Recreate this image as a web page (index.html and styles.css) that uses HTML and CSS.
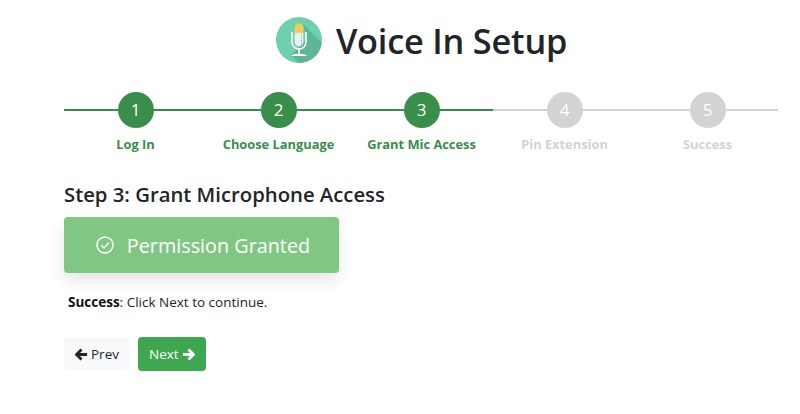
FILE: index.html
```html
<!DOCTYPE html>
<html lang="en">
<head>
  <meta charset="UTF-8">
  <title>Voice In Setup</title>
  <meta name="viewport" content="width=device-width, initial-scale=1.0">
  <link rel="stylesheet" href="styles.css">
</head>
<body>

  <header class="brand">
    <svg class="logo" width="46" height="46" viewBox="0 0 46 46">
      <defs>
        <clipPath id="logoClip"><circle cx="23" cy="23" r="23"/></clipPath>
      </defs>
      <circle cx="23" cy="23" r="23" fill="#6ed1ad"/>
      <path d="M27 7 L50 30 V50 H26 L15 38 L31 22 Z" fill="#5fb597" clip-path="url(#logoClip)"/>
      <path d="M18.7 16 V10.5 a4.3 4.3 0 0 1 8.6 0 V16 Z" fill="#f8c95c"/>
      <path d="M18.7 16 H27.3 V25 a4.3 4.3 0 0 1 -8.6 0 Z" fill="#e9f1f3"/>
      <path d="M25.5 17 V28" stroke="#7fb6dd" stroke-width="1" stroke-dasharray="1 1" fill="none"/>
      <path d="M16 15 V25 a7 7 0 0 0 14 0 V15" stroke="#fff" stroke-width="1.5" fill="none"/>
      <path d="M23 32 V37" stroke="#fff" stroke-width="1.6"/>
      <path d="M15 39 C17 36 29 36 31 39 Z" fill="#fff"/>
    </svg>
    <h1>Voice In Setup</h1>
  </header>

  <ol class="steps">
    <li class="step done"><span class="num">1</span><span class="name">Log In</span></li>
    <li class="step done"><span class="num">2</span><span class="name">Choose Language</span></li>
    <li class="step done"><span class="num">3</span><span class="name">Grant Mic Access</span></li>
    <li class="step"><span class="num">4</span><span class="name">Pin Extension</span></li>
    <li class="step"><span class="num">5</span><span class="name">Success</span></li>
  </ol>

  <h2>Step 3: Grant Microphone Access</h2>

  <button class="granted">
    <svg width="18" height="18" viewBox="0 0 18 18" fill="none" stroke="#fff" stroke-width="1.5">
      <circle cx="9" cy="9" r="8"/>
      <path d="M5.2 9.3 L8 12 L12.9 6.6"/>
    </svg>
    <span>Permission Granted</span>
  </button>

  <p class="message"><b>Success</b>: Click Next to continue.</p>

  <div class="nav">
    <button class="btn prev">
      <svg width="13" height="13" viewBox="0 0 14 14"><path d="M7 1.5 L1.5 7 L7 12.5 M2 7 H13" fill="none" stroke="#212529" stroke-width="3"/></svg>
      Prev
    </button>
    <button class="btn next">
      Next
      <svg width="13" height="13" viewBox="0 0 14 14"><path d="M7 1.5 L12.5 7 L7 12.5 M12 7 H1" fill="none" stroke="#fff" stroke-width="3"/></svg>
    </button>
  </div>

</body>
</html>
```

FILE: styles.css
```css
body {
  font-family: "Open Sans", "Noto Sans", sans-serif;
  background: #fff;
  color: #212529;
  margin: 0;
  padding: 16px 21px 0 64px;
}

.brand {
  display: flex;
  justify-content: center;
  align-items: center;
  gap: 14px;
  height: 48px;
}

h1 {
  font-size: 34.3px;
  font-weight: 600;
  margin: 0;
  letter-spacing: -0.2px;
}

.steps {
  list-style: none;
  display: flex;
  margin: 28px 0 0;
  padding: 0;
}

.step {
  flex: 1;
  display: flex;
  flex-direction: column;
  align-items: center;
  position: relative;
  color: #d3d3d3;
}

.step::before {
  content: "";
  position: absolute;
  top: 17px;
  left: 0;
  right: 0;
  height: 2px;
  background: #d3d3d3;
}

.step:last-child::before { right: 1px; }

.num {
  position: relative;
  width: 36px;
  height: 36px;
  line-height: 36px;
  border-radius: 50%;
  background: #d3d3d3;
  color: #fff;
  text-align: center;
  font-size: 17px;
}

.name {
  margin-top: 7px;
  font-size: 12.85px;
  line-height: 18px;
  font-weight: 700;
  white-space: nowrap;
}

.done { color: #388e4a; }
.done::before, .done .num { background: #388e4a; }

h2 {
  font-size: 20.3px;
  line-height: 24px;
  font-weight: 600;
  margin: 29px 0 11px;
}

.granted {
  display: flex;
  align-items: center;
  justify-content: center;
  gap: 13px;
  width: 275px;
  height: 56px;
  padding: 0 0 0 3px;
  border: none;
  border-radius: 4px;
  background: #81c784;
  color: #fff;
  font-family: inherit;
  font-size: 19.8px;
  box-shadow: 0 8px 16px rgba(0,0,0,0.1);
}

.message {
  font-size: 13.5px;
  line-height: 20px;
  margin: 19px 0 0 4px;
  color: #212529;
}

.message b { color: #111; }

.nav {
  display: flex;
  gap: 8px;
  margin-top: 25px;
}

.btn {
  display: flex;
  align-items: center;
  gap: 3px;
  height: 34px;
  padding: 0 11px;
  border: none;
  border-radius: 4px;
  font-family: inherit;
  font-size: 13.5px;
}

.prev { background: #f8f9fa; color: #212529; }
.next { background: #3ea64f; color: #fff; }
```
